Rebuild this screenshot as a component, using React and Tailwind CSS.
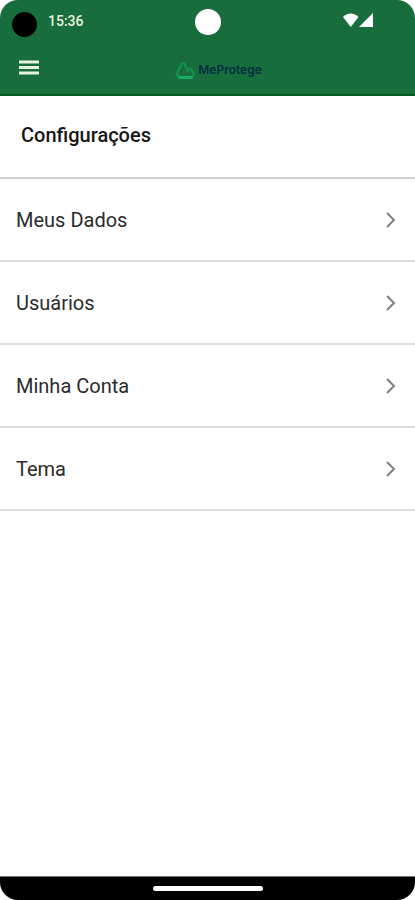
const items = ['Meus Dados', 'Usuários', 'Minha Conta', 'Tema'];

function StatusBar() {
  return (
    <div className="grid h-11 grid-cols-3 items-center pl-3 pr-10">
      <div className="flex items-center gap-[11px]">
        <span className="mt-1 size-[25px] rounded-full bg-black" />
        <span className="pb-0.5 text-sm font-medium text-[#e8f3df]">15:36</span>
      </div>
      <span className="ml-7 size-[26px] justify-self-center rounded-full bg-white" />
      <div className="flex items-center justify-end pb-1">
        <svg viewBox="0 0 32 16" className="h-4 w-8" fill="#ffffff" aria-hidden="true">
          <path d="M0 5C4 0.2 11.5 0.2 15.5 5L7.7 15Z" />
          <path d="M30 1V15H16Z" />
        </svg>
      </div>
    </div>
  );
}

function Logo() {
  return (
    <div className="flex items-center gap-0.5">
      <svg viewBox="0 0 21 19" className="h-[19px] w-[21px]" fill="none" strokeLinejoin="round" strokeLinecap="round" aria-hidden="true">
        <path d="M4 16.5L1.8 12.5L7 2.5H9.5L12.5 9.5L15.5 7.5L19 13L16.5 16.5" stroke="#128f4c" strokeWidth="2.6" />
        <path d="M4.5 16.5H16.5" stroke="#18ae60" strokeWidth="2.8" />
      </svg>
      <span className="font-['Inter',sans-serif] text-xs font-semibold text-[#052e44]">MeProtege</span>
    </div>
  );
}

function Header() {
  return (
    <header className="border-b-2 border-[#055a20] bg-[#186d3d]">
      <StatusBar />
      <div className="grid h-[50px] grid-cols-[40px_1fr_40px] items-center px-4 pb-0.5">
        <button type="button" aria-label="Menu" className="pl-[3px]">
          <svg viewBox="0 0 20 16" className="h-4 w-5" fill="#e8f3df" aria-hidden="true">
            <path d="M0 0.5H20V3.5H0ZM0 6H20V9H0ZM0 11.5H20V14.5H0Z" />
          </svg>
        </button>
        <div className="flex justify-center pl-[22px] pt-1">
          <Logo />
        </div>
      </div>
    </header>
  );
}

export default function App() {
  return (
    <div className="flex min-h-screen flex-col overflow-hidden rounded-[18px] bg-white font-['Roboto',sans-serif]">
      <Header />
      <main className="flex-1">
        <h1 className="border-b-2 border-[#d2d2d2] px-[21px] pb-7 pt-[25px] text-xl font-medium text-[#171717]">Configurações</h1>
        <nav>
          {items.map((item) => (
            <a
              key={item}
              href="#"
              className="flex h-[83px] items-center justify-between border-b-2 border-[#dedede] px-4 text-xl font-normal text-[#2b2b2b]"
            >
              <span>{item}</span>
              <svg viewBox="0 0 16 16" className="size-4" fill="none" stroke="#808080" strokeWidth="2" aria-hidden="true">
                <path d="M4 1L11 8L4 15" />
              </svg>
            </a>
          ))}
        </nav>
      </main>
      <footer className="flex h-6 justify-center border-t border-[#777777] bg-black pt-[9px]">
        <span className="h-[5px] w-[110px] rounded-full bg-white" />
      </footer>
    </div>
  );
}
